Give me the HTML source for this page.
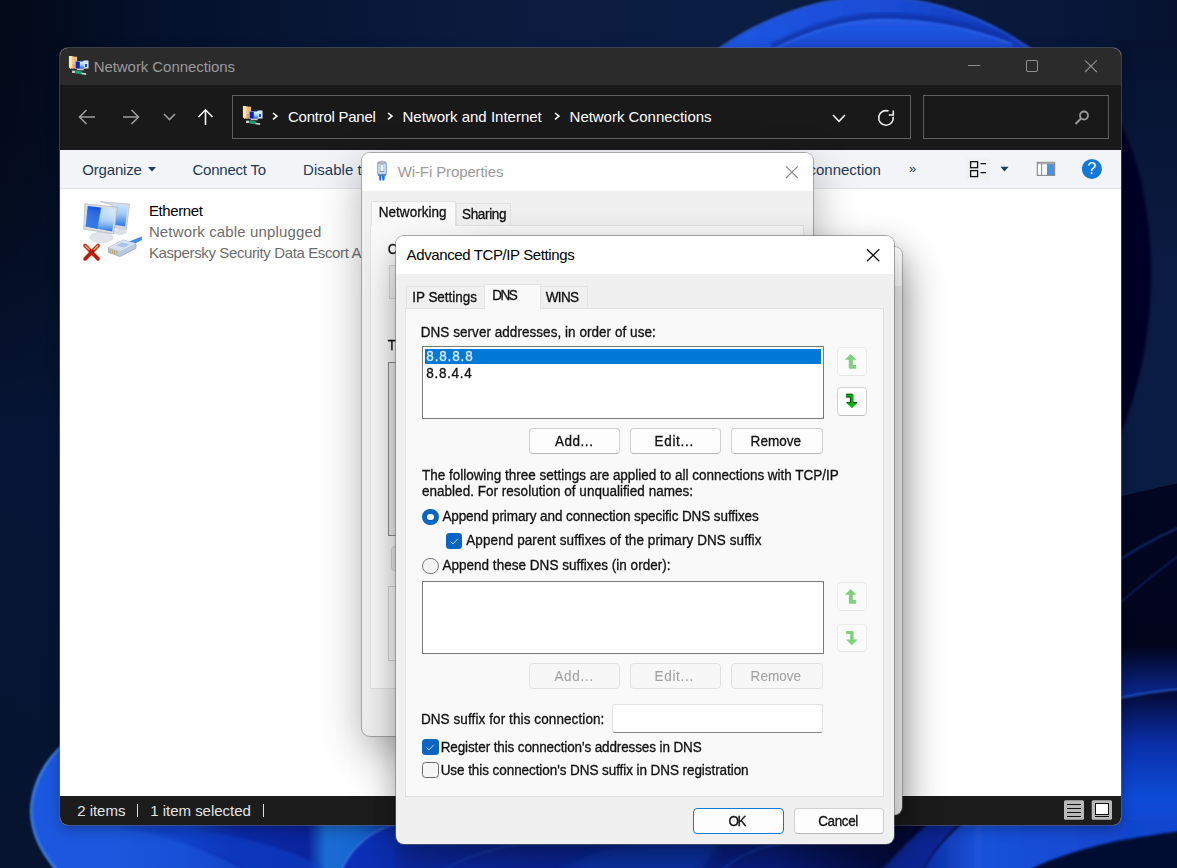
<!DOCTYPE html>
<html><head><meta charset="utf-8"><title>Network Connections</title><style>
*{box-sizing:border-box;margin:0;padding:0}
html,body{width:1177px;height:868px;overflow:hidden;background:#06122e;font-family:"Liberation Sans",sans-serif}
.abs{position:absolute}
.t{position:absolute;white-space:pre;line-height:1}
#wall{position:absolute;left:0;top:0;width:1177px;height:868px}
#exp{position:absolute;left:60px;top:47.5px;width:1061px;height:777px;border-radius:8px;overflow:hidden;background:#fff;box-shadow:0 0 0 1px rgba(110,110,110,.5),0 4px 14px rgba(0,0,0,.30)}
#wifi{position:absolute;left:361.5px;top:153px;width:451.3px;height:582.5px;border-radius:8px;overflow:hidden;background:#f0f0f0;box-shadow:0 0 0 1px rgba(120,120,120,.55),0 14px 44px rgba(0,0,0,.30)}
#ipv4{position:absolute;left:470px;top:247px;width:432.3px;height:567.5px;border-radius:8px;overflow:hidden;background:#f0f0f0;box-shadow:0 0 0 1px rgba(120,120,120,.5),0 12px 44px rgba(0,0,0,.36)}
#adv{position:absolute;left:395.7px;top:235.5px;width:498.3px;height:608px;border-radius:8px;overflow:hidden;background:#f0f0f0;box-shadow:0 0 0 1px rgba(110,110,110,.55),0 24px 44px rgba(0,0,0,.26),0 14px 24px rgba(0,0,0,.15)}
.btn{position:absolute;background:#fdfdfd;border:1px solid #d0d0d0;border-bottom-color:#b8b8b8;border-radius:4px}
.btn.dis{background:#f7f7f7;border-color:#e2e2e2}
.list{position:absolute;background:#fff;border:1px solid #7a7a7a}
</style></head>
<body>

<svg id="wall" viewBox="0 0 1177 868">
<defs>
<linearGradient id="bg" x1="0" y1="0" x2="1" y2="0"><stop offset="0" stop-color="#030917"/><stop offset=".12" stop-color="#04102a"/><stop offset=".4" stop-color="#0a1b3e"/><stop offset=".62" stop-color="#0b1d42"/><stop offset=".9" stop-color="#08183a"/><stop offset="1" stop-color="#06122f"/></linearGradient>
<linearGradient id="lft" x1="0" y1="0" x2="0" y2="1"><stop offset="0" stop-color="#030a1c" stop-opacity=".0"/><stop offset=".5" stop-color="#07173a" stop-opacity=".9"/><stop offset="1" stop-color="#06142f"/></linearGradient>
<linearGradient id="topb" x1="0" y1="0" x2="1" y2="0"><stop offset="0" stop-color="#1f56e2"/><stop offset=".55" stop-color="#1a4cd6"/><stop offset=".85" stop-color="#133cbe"/><stop offset="1" stop-color="#1238b4"/></linearGradient>
<linearGradient id="rgt" x1="0" y1="0" x2="0" y2="1"><stop offset="0" stop-color="#06122f"/><stop offset=".5" stop-color="#0a1c42"/><stop offset="1" stop-color="#0a1c42"/></linearGradient>
<linearGradient id="botL" x1="0" y1="0" x2="1" y2="0"><stop offset="0" stop-color="#2666ea"/><stop offset=".12" stop-color="#1c58de"/><stop offset=".35" stop-color="#1448d2"/><stop offset=".5" stop-color="#0b2aaa"/><stop offset=".71" stop-color="#0a249c"/><stop offset=".76" stop-color="#1a6cd4"/><stop offset=".85" stop-color="#1766d0"/><stop offset="1" stop-color="#0c34c0"/></linearGradient>
<linearGradient id="wedge" x1="0" y1="0" x2="1" y2="0"><stop offset="0" stop-color="#0a2aa0"/><stop offset=".25" stop-color="#1a52da"/><stop offset="1" stop-color="#1146cf"/></linearGradient>
<linearGradient id="r2" x1="0" y1="0" x2="0" y2="1"><stop offset="0" stop-color="#020622"/><stop offset=".75" stop-color="#02051c"/><stop offset="1" stop-color="#0a2a9a"/></linearGradient>
<linearGradient id="r3" x1="0" y1="0" x2="0" y2="1"><stop offset="0" stop-color="#03082e"/><stop offset=".3" stop-color="#0a2ea8"/><stop offset=".6" stop-color="#0d4cd6"/><stop offset=".75" stop-color="#1146cf"/><stop offset="1" stop-color="#1146cf"/></linearGradient>
<linearGradient id="midb" x1="0" y1="0" x2="1" y2="0"><stop offset="0" stop-color="#0d2cae"/><stop offset=".45" stop-color="#0c27a0"/><stop offset=".75" stop-color="#0a1f8a"/><stop offset="1" stop-color="#050b3a"/></linearGradient>
<linearGradient id="inb" x1="0" y1="0" x2="0" y2="1"><stop offset="0" stop-color="#2158e4"/><stop offset=".5" stop-color="#1c4fd8"/><stop offset="1" stop-color="#1642c4"/></linearGradient>
<filter id="b1"><feGaussianBlur stdDeviation=".8"/></filter>
<filter id="b2"><feGaussianBlur stdDeviation="1.5"/></filter>
<filter id="b4"><feGaussianBlur stdDeviation="4"/></filter>
<filter id="b8"><feGaussianBlur stdDeviation="8"/></filter>
</defs>
<rect width="1177" height="868" fill="url(#bg)"/>
<rect x="0" y="0" width="62" height="868" fill="url(#lft)"/>
<!-- top bloom -->
<path d="M712 54 C760 18 820 -3 872 -3 C932 -3 990 18 1040 56 Z" fill="url(#topb)" filter="url(#b1)"/>
<path d="M712 54 C760 18 820 -3 872 -3 C932 -3 990 18 1040 56" fill="none" stroke="#2f63ea" stroke-width="1.6" filter="url(#b1)"/>
<path d="M772 47 C812 26 850 16 885 16 C930 16 975 26 1010 40" fill="none" stroke="#0e30a6" stroke-width="7" filter="url(#b2)" opacity=".75"/>
<path d="M768 52 C810 30 850 20 885 20 C930 20 975 30 1012 44 L1020 60 L768 60 Z" fill="url(#inb)" filter="url(#b1)"/>
<path d="M768 52 C810 30 850 20 885 20 C930 20 975 30 1012 44" fill="none" stroke="#3467ec" stroke-width="1.4" filter="url(#b1)"/>
<!-- right strip -->
<rect x="1115" y="40" width="65" height="460" fill="url(#rgt)"/>
<path d="M1118 120 C1158 190 1166 330 1118 440 Z" fill="#020527" filter="url(#b2)"/>
<path d="M1115 498 C1140 492 1160 487 1180 483 L1180 700 L1115 700 Z" fill="url(#r2)"/>
<path d="M1115 563 C1140 546 1160 536 1180 527" stroke="#1a3690" stroke-width="1.4" fill="none" filter="url(#b1)"/>
<path d="M1115 607 C1140 586 1160 569 1180 555" stroke="#142a7c" stroke-width="1.4" fill="none" filter="url(#b1)"/>
<path d="M1115 699 C1140 694 1160 691 1180 689 L1180 870 L1115 870 Z" fill="url(#r3)"/>
<path d="M1115 699 C1140 694 1160 691 1180 689" stroke="#2a63e0" stroke-width="1.5" fill="none" filter="url(#b1)"/>
<!-- bottom band left -->
<rect x="58" y="815" width="352" height="60" fill="url(#botL)"/>
<path d="M75 826 C130 826 190 840 250 872 L120 872 C110 850 95 835 75 826 Z" fill="#1a58de" opacity=".55" filter="url(#b2)"/>
<path d="M120 826 C200 826 280 840 330 872 L250 872 C215 850 170 832 120 826 Z" fill="#0f3fc8" opacity=".6" filter="url(#b2)"/>
<circle cx="415" cy="902" r="80" fill="#0b30b6"/>
<circle cx="415" cy="902" r="80" fill="none" stroke="#3e6fe0" stroke-width="1.6" filter="url(#b1)"/>
<!-- bottom middle (under dialog) -->
<rect x="395" y="835" width="505" height="40" fill="url(#midb)"/>
<path d="M560 872 C590 850 630 842 680 842 L720 842 L700 872 Z" fill="#1038b6" filter="url(#b4)"/>
<path d="M440 872 C480 848 520 842 560 842" fill="none" stroke="#1a3fb8" stroke-width="2" filter="url(#b1)"/>
<path d="M720 872 C740 852 770 843 800 842" fill="none" stroke="#183cb4" stroke-width="2" filter="url(#b1)"/>
<!-- bottom right -->
<rect x="890" y="820" width="226" height="55" fill="#050b3a"/>
<path d="M880 872 C900 850 915 835 930 822 L960 822 C945 838 932 852 922 872 Z" fill="#0b2594" filter="url(#b2)"/>
<path d="M922 872 C934 850 948 836 964 822 L1140 822 L1140 872 Z" fill="url(#wedge)" filter="url(#b1)"/>
<path d="M1026 872 C1045 860 1085 848 1117 841 C1140 837 1160 834 1180 831 L1180 872 Z" fill="#040a30" filter="url(#b1)"/>
<!-- left bottom bloom -->
<path d="M62 746 C38 768 27 800 33 826 C37 845 47 858 58 872 L120 874 L120 746 Z" fill="#1d58df" filter="url(#b1)"/>
<path d="M62 746 C38 768 27 800 33 826 C37 845 47 858 58 872" fill="none" stroke="#4a8cf2" stroke-width="2.2" filter="url(#b1)"/>
</svg>
<div id="exp"><div class="abs" style="left:0;top:0;width:100%;height:37.5px;background:#2b2b2b"></div><div class="abs" style="left:0;top:37.5px;width:100%;height:64.7px;background:#191919"></div><div class="abs" style="left:0;top:102.19999999999999px;width:100%;height:39.4px;background:#f3f4f8;border-bottom:1px solid #e4e5e8"></div><div class="abs" style="left:0;top:748.5px;width:100%;height:30px;background:#1c1c1c"></div><svg class="abs" style="left:4px;top:4.5px" width="30" height="30" viewBox="0 0 30 30">
    <defs><linearGradient id="ns1" x1="0" y1="0" x2="0" y2="1"><stop offset="0" stop-color="#f4fbff"/><stop offset=".6" stop-color="#8cc0f2"/><stop offset="1" stop-color="#1c5fe0"/></linearGradient>
    <filter id="nb"><feGaussianBlur stdDeviation=".35"/></filter></defs>
    <g filter="url(#nb)">
    <path d="M4.9 4 L8.4 3.9 L8.4 16 L6.4 17 L4.9 15.2 Z" fill="#f6e3b0"/>
    <path d="M8.2 4.6 L13.1 4.8 L13.1 16.2 L8.2 16.6 Z" fill="#e9bd78"/>
    <path d="M8.2 4.6 L9.6 4.6 L9.6 16.4 L8.2 16.6 Z" fill="#f2d293"/>
    <path d="M8.6 12 H11.2 V16.4 H8.6 Z" fill="#e59a4c" opacity=".7"/>
    <rect x="20" y="8.8" width="4.2" height="7.4" fill="#cfe6fb" stroke="#d9dde3" stroke-width=".5"/>
    <rect x="21" y="12" width="2" height="3" fill="#1b48dc"/>
    <rect x="11.2" y="9.2" width="9.4" height="7.6" fill="#dfe3e8"/>
    <rect x="11.6" y="9.5" width="4.3" height="7" fill="#0c22c6"/>
    <rect x="15.9" y="9.5" width="4.3" height="7" fill="url(#ns1)"/>
    <path d="M16 8.6 H19 V9.6 H16 Z" fill="#2050d0"/>
    <path d="M13 17 H19.5 L20 18.2 H12.4 Z" fill="#c9cdd3"/>
    <rect x="8" y="18.6" width="3.2" height="2.4" fill="#c8c8c8"/>
    <path d="M11.4 18.6 L17.6 19.2 L17.6 22.2 L11.4 21.4 Z" fill="#12a472"/>
    <path d="M17.4 20.4 L22.2 21.2 L22.2 23 L17.4 22.3 Z" fill="#cfcfd2"/>
    </g></svg><span class="t" style="left:33.7px;top:11.4px;font-size:15px;letter-spacing:-0.065px;color:#9a9a9a;">Network Connections</span><svg class="abs" style="left:900px;top:2.5px" width="150" height="32" viewBox="960 50 150 32"><g stroke="#8e8e8e" stroke-width="1.1" fill="none"><path d="M968 65.5 H980.2"/><rect x="1026.5" y="60.5" width="11" height="11" rx="1.5"/><path d="M1085 60.3 L1096.8 72 M1096.8 60.3 L1085 72"/></g></svg><svg class="abs" style="left:10px;top:52.5px" width="160" height="34" viewBox="70 100 160 34"><g fill="none" stroke-width="1.6">
    <path d="M95 117 H80 M86.5 110 L79.5 117 L86.5 124" stroke="#9c9c9c"/>
    <path d="M123 117 H138 M131.5 110 L138.5 117 L131.5 124" stroke="#9c9c9c"/>
    <path d="M164 114 L169.5 119.5 L175 114" stroke="#9c9c9c"/>
    <path d="M205.5 125 V110 M198.5 117 L205.5 109.8 L212.5 117" stroke="#f2f2f2"/></g></svg><div class="abs" style="left:172px;top:47.5px;width:679px;height:44px;border:1px solid #5f5f5f"></div><div class="abs" style="left:863px;top:47.5px;width:186px;height:44px;border:1px solid #5f5f5f"></div><svg class="abs" style="left:178px;top:54.7px" width="30" height="30" viewBox="0 0 30 30">
    <defs><linearGradient id="ns1" x1="0" y1="0" x2="0" y2="1"><stop offset="0" stop-color="#f4fbff"/><stop offset=".6" stop-color="#8cc0f2"/><stop offset="1" stop-color="#1c5fe0"/></linearGradient>
    <filter id="nb"><feGaussianBlur stdDeviation=".35"/></filter></defs>
    <g filter="url(#nb)">
    <path d="M4.9 4 L8.4 3.9 L8.4 16 L6.4 17 L4.9 15.2 Z" fill="#f6e3b0"/>
    <path d="M8.2 4.6 L13.1 4.8 L13.1 16.2 L8.2 16.6 Z" fill="#e9bd78"/>
    <path d="M8.2 4.6 L9.6 4.6 L9.6 16.4 L8.2 16.6 Z" fill="#f2d293"/>
    <path d="M8.6 12 H11.2 V16.4 H8.6 Z" fill="#e59a4c" opacity=".7"/>
    <rect x="20" y="8.8" width="4.2" height="7.4" fill="#cfe6fb" stroke="#d9dde3" stroke-width=".5"/>
    <rect x="21" y="12" width="2" height="3" fill="#1b48dc"/>
    <rect x="11.2" y="9.2" width="9.4" height="7.6" fill="#dfe3e8"/>
    <rect x="11.6" y="9.5" width="4.3" height="7" fill="#0c22c6"/>
    <rect x="15.9" y="9.5" width="4.3" height="7" fill="url(#ns1)"/>
    <path d="M16 8.6 H19 V9.6 H16 Z" fill="#2050d0"/>
    <path d="M13 17 H19.5 L20 18.2 H12.4 Z" fill="#c9cdd3"/>
    <rect x="8" y="18.6" width="3.2" height="2.4" fill="#c8c8c8"/>
    <path d="M11.4 18.6 L17.6 19.2 L17.6 22.2 L11.4 21.4 Z" fill="#12a472"/>
    <path d="M17.4 20.4 L22.2 21.2 L22.2 23 L17.4 22.3 Z" fill="#cfcfd2"/>
    </g></svg><svg class="abs" style="left:211.60000000000002px;top:64.9px" width="6" height="8.4" viewBox="-1 -1 6 8.4"><path d="M0 0 L4 3.2 L0 6.4" fill="none" stroke="#fff" stroke-width="1.5"/></svg><span class="t" style="left:228.0px;top:61.8px;font-size:15px;letter-spacing:-0.254px;color:#fff;">Control Panel</span><svg class="abs" style="left:326.5px;top:64.9px" width="6" height="8.4" viewBox="-1 -1 6 8.4"><path d="M0 0 L4 3.2 L0 6.4" fill="none" stroke="#fff" stroke-width="1.5"/></svg><span class="t" style="left:342.5px;top:61.8px;font-size:15px;letter-spacing:0.001px;color:#fff;">Network and Internet</span><svg class="abs" style="left:493.79999999999995px;top:64.9px" width="6" height="8.4" viewBox="-1 -1 6 8.4"><path d="M0 0 L4 3.2 L0 6.4" fill="none" stroke="#fff" stroke-width="1.5"/></svg><span class="t" style="left:509.6px;top:61.8px;font-size:15px;letter-spacing:-0.037px;color:#fff;">Network Connections</span><svg class="abs" style="left:765px;top:52.5px" width="280" height="36" viewBox="825 100 280 36"><g fill="none" stroke="#f0f0f0" stroke-width="1.6">
    <path d="M833 115 L839 121.3 L845 115"/>
    <path d="M888.6 111.1 A7.3 7.3 0 1 0 893.2 116.8" />
    <path d="M888.8 115 H893.3 V110.5"/></g>
    <g fill="none" stroke="#9a9a9a"><circle cx="1084" cy="115.5" r="4" stroke-width="1.8"/><path d="M1081 118.5 L1075.5 124" stroke-width="2"/></g></svg><span class="t" style="left:22.3px;top:114.8px;font-size:15px;letter-spacing:-0.189px;color:#1e395b;">Organize</span><svg class="abs" style="left:87.5px;top:119.0px" width="8" height="5" viewBox="0 0 8 5"><path d="M0 0 H8 L4 4.6 Z" fill="#1e395b"/></svg><span class="t" style="left:132.4px;top:114.8px;font-size:15px;letter-spacing:-0.215px;color:#1e395b;">Connect To</span><span class="t" style="left:243.0px;top:114.8px;font-size:15px;letter-spacing:0.051px;color:#1e395b;">Disable t</span><span class="t" style="left:748.5px;top:114.8px;font-size:15px;letter-spacing:-0.012px;color:#1e395b;">connection</span><span class="t" style="left:849.0px;top:114.3px;font-size:13px;letter-spacing:0.000px;color:#1e395b;">»</span><svg class="abs" style="left:905px;top:108.5px" width="150" height="26" viewBox="965 156 150 26">
    <rect x="966" y="158" width="24" height="22" fill="#efefef" opacity=".6"/>
    <g fill="none" stroke="#111" stroke-width="1.3"><rect x="970.6" y="161.7" width="7" height="6"/><rect x="970.6" y="170.6" width="7" height="6"/><path d="M980.5 163.6 H986 M980.5 172.6 H986"/></g>
    <path d="M1000.5 166.8 H1008.6 L1004.5 171.4 Z" fill="#1e395b"/>
    <rect x="1037.3" y="162.4" width="17.3" height="13" fill="#fff" stroke="#8d8d8d" stroke-width="1.2"/>
    <rect x="1047" y="163" width="7" height="12" fill="#4a90e2"/><path d="M1041.6 163 V175" stroke="#9a9a9a" stroke-width="1.2"/><path d="M1038 163.4 H1054" stroke="#a9a9a9" stroke-width="1.6"/>
    <circle cx="1091.9" cy="168.9" r="10" fill="#1379d8"/></svg><span class="t" style="left:1027.2px;top:113.6px;font-size:16px;letter-spacing:0.000px;color:#fff;">?</span><svg class="abs" style="left:18px;top:148.5px" width="70" height="70" viewBox="0 0 70 70">
    <defs><linearGradient id="scr" x1="0" y1="0" x2="1" y2="0.15"><stop offset="0" stop-color="#1560e6"/><stop offset=".5" stop-color="#0848d6"/><stop offset=".55" stop-color="#b9dbf8"/><stop offset="1" stop-color="#d6ebfb"/></linearGradient>
    <linearGradient id="scrb" x1="0" y1="0" x2="0" y2="1"><stop offset="0" stop-color="#ffffff" stop-opacity="0"/><stop offset=".55" stop-color="#7ab4f0" stop-opacity=".35"/><stop offset="1" stop-color="#1a66e2" stop-opacity=".95"/></linearGradient>
    <linearGradient id="scr2" x1="0" y1="0" x2="0" y2="1"><stop offset="0" stop-color="#cfe8fb"/><stop offset=".45" stop-color="#9fcdf6"/><stop offset="1" stop-color="#2a78e4"/></linearGradient>
    <filter id="ib"><feGaussianBlur stdDeviation=".45"/></filter></defs>
    <g filter="url(#ib)">
    <!-- back monitor -->
    <ellipse cx="42" cy="36" rx="7" ry="3" fill="#dcdfe4"/>
    <path d="M22.2 5.6 L51.6 8.1 L48.4 33.5 L34 31.5 L34 9 Z" fill="#d6dae0" stroke="#b9bfc8" stroke-width=".7"/>
    <path d="M24.2 7.3 L49.6 9.5 L47.2 30.4 L35 28.6 L35 8.3 Z" fill="url(#scr2)"/>
    <!-- front monitor -->
    <path d="M19.5 36 L30 37.8 L31 41 L19 40 Z" fill="#cfd3d9"/>
    <ellipse cx="23.4" cy="41.4" rx="11.6" ry="5.2" fill="#e1e4e8" stroke="#cdd1d7" stroke-width=".6"/>
    <path d="M6.9 7.7 L39.5 11.3 L35.5 37.9 L5.8 33.1 Z" fill="#d9dde3" stroke="#b4bac4" stroke-width=".8"/>
    <path d="M9.7 10.1 L36.9 13.3 L34.3 35.5 L7.7 30.4 Z" fill="url(#scr)"/>
    <path d="M9.7 10.1 L36.9 13.3 L34.3 35.5 L7.7 30.4 Z" fill="url(#scrb)"/>
    <!-- rj45 plug -->
    <path d="M51 45.5 L63.7 40.6 L64 44 L55 48.5 Z" fill="#3f8de8"/>
    <path d="M30.2 51.6 L45.2 44 L58 47.6 L58 52.4 L41.9 60.5 L30.6 56.5 Z" fill="#b9c9de" stroke="#90a2bc" stroke-width=".7"/>
    <path d="M45.2 44 L58 47.6 L42.5 55 L30.2 51.6 Z" fill="#d7e2f0"/>
    <path d="M44 46.5 L52 48.6 L46 51.6 L38.5 49.6 Z" fill="#a9c4e6"/>
    <path d="M32.2 53.2 V56.4 M34.4 53.8 V57.1 M36.6 54.4 V57.8 M38.8 55 V58.5" stroke="#c2a35a" stroke-width="1"/>
    <!-- red x -->
    <path d="M7.2 49.6 L20 62.8 M20 49.6 L7.2 62.8" stroke="#e2a362" stroke-width="4.4" stroke-linecap="round"/>
    <path d="M7.2 49.6 L20 62.8 M20 49.6 L7.2 62.8" stroke="#b91313" stroke-width="3.2" stroke-linecap="round"/>
    <path d="M7.6 50 L11 53.4 M19.6 50 L16.2 53.4" stroke="#e9a77a" stroke-width="1.8" stroke-linecap="round" opacity=".85"/>
    </g></svg><span class="t" style="left:88.9px;top:155.2px;font-size:15px;letter-spacing:-0.391px;color:#000;">Ethernet</span><span class="t" style="left:88.9px;top:176.2px;font-size:15px;letter-spacing:0.144px;color:#6d6d6d;">Network cable unplugged</span><span class="t" style="left:88.9px;top:197.2px;font-size:15px;letter-spacing:-0.377px;color:#6d6d6d;">Kaspersky Security Data Escort A</span><span class="t" style="left:17.2px;top:755.7px;font-size:15px;letter-spacing:-0.025px;color:#e4e4e4;">2 items</span><div class="abs" style="left:77px;top:756.5px;width:1.3px;height:13px;background:#dcdcdc"></div><span class="t" style="left:90.2px;top:755.7px;font-size:15px;letter-spacing:-0.010px;color:#e4e4e4;">1 item selected</span><div class="abs" style="left:202.8px;top:756.5px;width:1.3px;height:13px;background:#dcdcdc"></div><svg class="abs" style="left:1000px;top:750.5px" width="56" height="24" viewBox="1060 798 56 24">
    <rect x="1064" y="800.3" width="20" height="19.4" rx="1.5" fill="#b9b9b9"/>
    <path d="M1067 804.5 H1081 M1067 808.5 H1081 M1067 812.5 H1081 M1067 816.5 H1081" stroke="#111" stroke-width="1"/>
    <rect x="1091.7" y="800.3" width="20.3" height="19.4" rx="1.5" fill="#b9b9b9"/>
    <rect x="1095.5" y="803.5" width="13" height="11" fill="#fff" stroke="#111" stroke-width="1"/>
    <path d="M1095 816.5 H1109" stroke="#111" stroke-width="1"/></svg></div>
<div id="wifi"><div class="abs" style="left:0;top:0;width:100%;height:38px;background:#fff"></div><svg class="abs" style="left:8.5px;top:3px" width="24" height="30" viewBox="0 0 24 30">
    <defs><filter id="wb"><feGaussianBlur stdDeviation=".4"/></filter></defs><g filter="url(#wb)">
    <rect x="7.1" y="5.2" width="9.8" height="14.2" rx="2.6" fill="#86a4d6"/>
    <rect x="8.1" y="7.4" width="7.8" height="10.6" rx="1.2" fill="#c3d9f1"/>
    <path d="M9.4 5.2 Q12 4 14.6 5.2 L14.4 7.6 L13.2 9 V15.2 H10.2 V9 L9.6 7.6 Z" fill="#b5b7ba"/>
    <rect x="10.9" y="9" width="2.1" height="5.8" fill="#f4fbff"/>
    <rect x="10" y="15" width="4" height="1" fill="#8d9096"/>
    <rect x="8" y="18.6" width="8" height="1.1" fill="#3f5f9e"/>
    <path d="M9 19.7 H11.4 L11.2 24.6 H9.4 Z M12 19.7 H14.9 L14.4 24.6 H12.4 Z" fill="#1b72e2"/>
    </g></svg><span class="t" style="left:36.2px;top:11.3px;font-size:15px;letter-spacing:-0.114px;color:#9b9b9b;">Wi-Fi Properties</span><svg class="abs" style="left:423.5px;top:12px" width="14" height="14" viewBox="785 165 14 14"><path d="M786 166.3 L797.8 178 M797.8 166.3 L786 178" stroke="#8a8a8a" stroke-width="1.1" fill="none"/></svg><div class="abs" style="left:8.5px;top:71.5px;width:434px;height:464px;background:#f9f9f9;border:1px solid #e2e2e2"></div><div class="abs" style="left:94.30000000000001px;top:49.5px;width:55.4px;height:22.5px;background:#f0f0f0;border:1px solid #e2e2e2;border-bottom:none"></div><div class="abs" style="left:9.300000000000011px;top:47.5px;width:85.5px;height:25px;background:#f9f9f9;border:1px solid #e2e2e2;border-bottom:none"></div><span class="t" style="left:17.3px;top:52.8px;font-size:13.5px;transform:scaleY(1.08);transform-origin:0 84.65%;-webkit-text-stroke:0.3px;letter-spacing:0.020px;color:#111;">Networking</span><span class="t" style="left:100.5px;top:55.0px;font-size:13.5px;transform:scaleY(1.08);transform-origin:0 84.65%;-webkit-text-stroke:0.3px;letter-spacing:-0.337px;color:#111;">Sharing</span><span class="t" style="left:26.2px;top:90.1px;font-size:13.5px;transform:scaleY(1.08);transform-origin:0 84.65%;-webkit-text-stroke:0.3px;letter-spacing:0.230px;color:#111;">Connect using:</span><div class="abs" style="left:27.0px;top:111.80000000000001px;width:396px;height:34.5px;background:#f3f3f3;border:1px solid #d9d9d9"></div><span class="t" style="left:26.2px;top:185.9px;font-size:13.5px;transform:scaleY(1.08);transform-origin:0 84.65%;-webkit-text-stroke:0.3px;letter-spacing:0.192px;color:#111;">This connection uses the following items:</span><div class="abs" style="left:26.80000000000001px;top:208.5px;width:396px;height:174px;background:#ececec;border:1px solid #8c8c8c"></div><div class="btn" style="left:29.19999999999999px;top:393px;width:120px;height:25px;background:#ececec;border-color:#d3d3d3"></div><div class="abs" style="left:26.80000000000001px;top:433px;width:396px;height:75px;border:1px solid #d5d5d5"></div></div>
<div id="ipv4"><div class="abs" style="left:0;top:0;width:100%;height:38.7px;background:#fff"></div></div>
<div id="adv"><div class="abs" style="left:0;top:0;width:100%;height:38.3px;background:#fff"></div><span class="t" style="left:10.9px;top:11.6px;font-size:15px;letter-spacing:-0.387px;color:#000;">Advanced TCP/IP Settings</span><svg class="abs" style="left:469.3px;top:11.5px" width="16" height="16" viewBox="865 247 16 16"><path d="M867 249.2 L879.3 261.3 M879.3 249.2 L867 261.3" stroke="#111" stroke-width="1.3" fill="none"/></svg><div class="abs" style="left:9.100000000000023px;top:72.5px;width:478.8px;height:488.8px;background:#f9f9f9;border:1px solid #e0e0e0"></div><div class="abs" style="left:10.300000000000011px;top:50.30000000000001px;width:78.8px;height:22.7px;background:#f0f0f0;border:1px solid #e4e4e4;border-bottom:none"></div><div class="abs" style="left:144.3px;top:50.30000000000001px;width:48.5px;height:22.7px;background:#f0f0f0;border:1px solid #e4e4e4;border-bottom:none"></div><div class="abs" style="left:88.60000000000002px;top:48.0px;width:56.3px;height:25.6px;background:#f9f9f9;border:1px solid #e4e4e4;border-bottom:none"></div><span class="t" style="left:16.5px;top:55.7px;font-size:13.5px;transform:scaleY(1.08);transform-origin:0 84.65%;-webkit-text-stroke:0.3px;letter-spacing:-0.024px;color:#111;">IP Settings</span><span class="t" style="left:96.6px;top:53.1px;font-size:13.5px;transform:scaleY(1.08);transform-origin:0 84.65%;-webkit-text-stroke:0.3px;letter-spacing:-1.500px;color:#111;">DNS</span><span class="t" style="left:150.1px;top:55.7px;font-size:13.5px;transform:scaleY(1.08);transform-origin:0 84.65%;-webkit-text-stroke:0.3px;letter-spacing:-0.681px;color:#111;">WINS</span><span class="t" style="left:25.1px;top:90.4px;font-size:13.5px;transform:scaleY(1.08);transform-origin:0 84.65%;-webkit-text-stroke:0.3px;letter-spacing:0.043px;color:#111;">DNS server addresses, in order of use:</span><div class="list" style="left:26.600000000000023px;top:110.30000000000001px;width:401.4px;height:73px"></div><div class="abs" style="left:29.30000000000001px;top:113.0px;width:396.3px;height:15.4px;background:#0078d7"></div><span class="t" style="left:30.6px;top:114.8px;font-size:13.5px;transform:scaleY(1.08);transform-origin:0 84.65%;-webkit-text-stroke:0.3px;letter-spacing:0.854px;color:#dbe9f8;">8.8.8.8</span><span class="t" style="left:30.6px;top:131.0px;font-size:13.5px;transform:scaleY(1.08);transform-origin:0 84.65%;-webkit-text-stroke:0.3px;letter-spacing:0.687px;color:#111;">8.8.4.4</span><div class="abs" style="left:441.5px;top:111.6px;width:30.3px;height:28.6px;background:#fbfbfb;border:1px solid #ebebeb;border-bottom-color:#e6e6e6;border-radius:4.5px"></div><svg class="abs" style="left:441.5px;top:111.6px" width="31" height="29" viewBox="0 0 31 29"><path d="M13.7 7 L19.5 12.8 H15.8 V17.9 H19.2 V21.8 H13 Q11.8 21.8 11.8 20.6 V12.8 H7.9 Z" fill="#80d080"/></svg><div class="abs" style="left:441.5px;top:151.9px;width:30.3px;height:28.6px;background:#fefefe;border:1px solid #d2d2d2;border-bottom-color:#bdbdbd;border-radius:4.5px"></div><svg class="abs" style="left:441.5px;top:151.9px" width="31" height="29" viewBox="0 0 31 29"><path d="M9.1 6.9 H15.4 Q16.6 6.9 16.6 8.1 V15.5 H20.6 L14.8 21.2 L9.1 15.5 H13.2 V10.1 H9.1 Z" fill="#00b400"/><path d="M9.1 7.2 H15.4 M9.1 10.1 H13.4 V15.6 H9.6 M16.4 15.6 H20" fill="none" stroke="#0a3a0a" stroke-width="1"/></svg><div class="btn" style="left:133.2px;top:192.8px;width:90.7px;height:25.5px;"></div><span class="t" style="left:159.2px;top:199.6px;font-size:13.5px;transform:scaleY(1.08);transform-origin:0 84.65%;-webkit-text-stroke:0.3px;letter-spacing:0.556px;color:#111;">Add...</span><div class="btn" style="left:234.5px;top:192.8px;width:90.5px;height:25.5px;"></div><span class="t" style="left:258.8px;top:199.6px;font-size:13.5px;transform:scaleY(1.08);transform-origin:0 84.65%;-webkit-text-stroke:0.3px;letter-spacing:0.706px;color:#111;">Edit...</span><div class="btn" style="left:335.8px;top:192.8px;width:91.2px;height:25.5px;"></div><span class="t" style="left:354.9px;top:199.6px;font-size:13.5px;transform:scaleY(1.08);transform-origin:0 84.65%;-webkit-text-stroke:0.3px;letter-spacing:0.048px;color:#111;">Remove</span><span class="t" style="left:26.3px;top:233.6px;font-size:13.5px;transform:scaleY(1.08);transform-origin:0 84.65%;-webkit-text-stroke:0.3px;letter-spacing:-0.014px;color:#111;">The following three settings are applied to all connections with TCP/IP</span><span class="t" style="left:26.3px;top:249.5px;font-size:13.5px;transform:scaleY(1.08);transform-origin:0 84.65%;-webkit-text-stroke:0.3px;letter-spacing:0.020px;color:#111;">enabled. For resolution of unqualified names:</span><div class="abs" style="left:26.5px;top:273.3px;width:16.4px;height:16.4px;border-radius:50%;background:#fff;border:5.4px solid #0a64c2"></div><span class="t" style="left:46.7px;top:274.7px;font-size:13.5px;transform:scaleY(1.08);transform-origin:0 84.65%;-webkit-text-stroke:0.3px;letter-spacing:-0.091px;color:#111;">Append primary and connection specific DNS suffixes</span><div class="abs" style="left:50.2px;top:297.2px;width:16.2px;height:16.2px;background:#0a64c2;border-radius:3.5px"></div><svg class="abs" style="left:50.2px;top:297.2px" width="16.2" height="16.2" viewBox="0 0 16 16"><path d="M4.6 8.5 L6.9 10.8 L11.6 5.8" fill="none" stroke="#cfe2f6" stroke-width=".9"/></svg><span class="t" style="left:70.6px;top:298.5px;font-size:13.5px;transform:scaleY(1.08);transform-origin:0 84.65%;-webkit-text-stroke:0.3px;letter-spacing:0.080px;color:#111;">Append parent suffixes of the primary DNS suffix</span><div class="abs" style="left:26.5px;top:322.1px;width:16.4px;height:16.4px;border-radius:50%;background:#f4f4f4;border:1.5px solid #7c7c7c"></div><span class="t" style="left:46.7px;top:323.1px;font-size:13.5px;transform:scaleY(1.08);transform-origin:0 84.65%;-webkit-text-stroke:0.3px;letter-spacing:0.029px;color:#111;">Append these DNS suffixes (in order):</span><div class="list" style="left:26.600000000000023px;top:345.20000000000005px;width:401.4px;height:73px"></div><div class="abs" style="left:441.5px;top:346.8px;width:30.3px;height:28.6px;background:#fbfbfb;border:1px solid #ebebeb;border-bottom-color:#e6e6e6;border-radius:4.5px"></div><svg class="abs" style="left:441.5px;top:346.8px" width="31" height="29" viewBox="0 0 31 29"><path d="M13.7 7 L19.5 12.8 H15.8 V17.9 H19.2 V21.8 H13 Q11.8 21.8 11.8 20.6 V12.8 H7.9 Z" fill="#80d080"/></svg><div class="abs" style="left:441.5px;top:388.4px;width:30.3px;height:28.6px;background:#fbfbfb;border:1px solid #ebebeb;border-bottom-color:#e6e6e6;border-radius:4.5px"></div><svg class="abs" style="left:441.5px;top:388.4px" width="31" height="29" viewBox="0 0 31 29"><path d="M9.1 6.9 H15.4 Q16.6 6.9 16.6 8.1 V15.5 H20.6 L14.8 21.2 L9.1 15.5 H13.2 V10.1 H9.1 Z" fill="#80d080"/></svg><div class="btn dis" style="left:133.2px;top:427.7px;width:90.7px;height:25.5px;"></div><span class="t" style="left:158.7px;top:434.8px;font-size:13.5px;transform:scaleY(1.08);transform-origin:0 84.65%;-webkit-text-stroke:0.3px;letter-spacing:0.736px;color:#a3a3a3;-webkit-text-stroke:0.1px;">Add...</span><div class="btn dis" style="left:234.5px;top:427.7px;width:90.5px;height:25.5px;"></div><span class="t" style="left:258.8px;top:434.8px;font-size:13.5px;transform:scaleY(1.08);transform-origin:0 84.65%;-webkit-text-stroke:0.3px;letter-spacing:0.706px;color:#a3a3a3;-webkit-text-stroke:0.1px;">Edit...</span><div class="btn dis" style="left:335.8px;top:427.7px;width:91.2px;height:25.5px;"></div><span class="t" style="left:354.9px;top:434.8px;font-size:13.5px;transform:scaleY(1.08);transform-origin:0 84.65%;-webkit-text-stroke:0.3px;letter-spacing:0.048px;color:#a3a3a3;-webkit-text-stroke:0.1px;">Remove</span><span class="t" style="left:25.2px;top:477.0px;font-size:13.5px;transform:scaleY(1.08);transform-origin:0 84.65%;-webkit-text-stroke:0.3px;letter-spacing:0.096px;color:#111;">DNS suffix for this connection:</span><div class="abs" style="left:216.09999999999997px;top:468.5px;width:211.6px;height:28.8px;background:#fff;border:1px solid #e3e3e3;border-bottom:1.4px solid #868686;border-radius:3px"></div><div class="abs" style="left:26.7px;top:503.7px;width:16.2px;height:16.2px;background:#0a64c2;border-radius:3.5px"></div><svg class="abs" style="left:26.7px;top:503.7px" width="16.2" height="16.2" viewBox="0 0 16 16"><path d="M4.6 8.5 L6.9 10.8 L11.6 5.8" fill="none" stroke="#cfe2f6" stroke-width=".9"/></svg><span class="t" style="left:45.0px;top:505.8px;font-size:13.5px;transform:scaleY(1.08);transform-origin:0 84.65%;-webkit-text-stroke:0.3px;letter-spacing:-0.118px;color:#111;">Register this connection&#x27;s addresses in DNS</span><div class="abs" style="left:26.7px;top:526.1px;width:16.2px;height:16.2px;background:#f6f6f6;border:1.2px solid #6b6b6b;border-radius:3.5px"></div><span class="t" style="left:45.0px;top:528.5px;font-size:13.5px;transform:scaleY(1.08);transform-origin:0 84.65%;-webkit-text-stroke:0.3px;letter-spacing:-0.070px;color:#111;">Use this connection&#x27;s DNS suffix in DNS registration</span><div class="btn" style="left:297.1px;top:572.5px;width:91.0px;height:25.5px;border:1.6px solid #0f7ad6;"></div><span class="t" style="left:332.8px;top:579.5px;font-size:13.5px;transform:scaleY(1.08);transform-origin:0 84.65%;-webkit-text-stroke:0.3px;letter-spacing:-1.500px;color:#111;">OK</span><div class="btn" style="left:398.8px;top:572.5px;width:90.0px;height:25.5px;"></div><span class="t" style="left:422.5px;top:579.5px;font-size:13.5px;transform:scaleY(1.08);transform-origin:0 84.65%;-webkit-text-stroke:0.3px;letter-spacing:-0.385px;color:#111;">Cancel</span></div>
</body></html>
